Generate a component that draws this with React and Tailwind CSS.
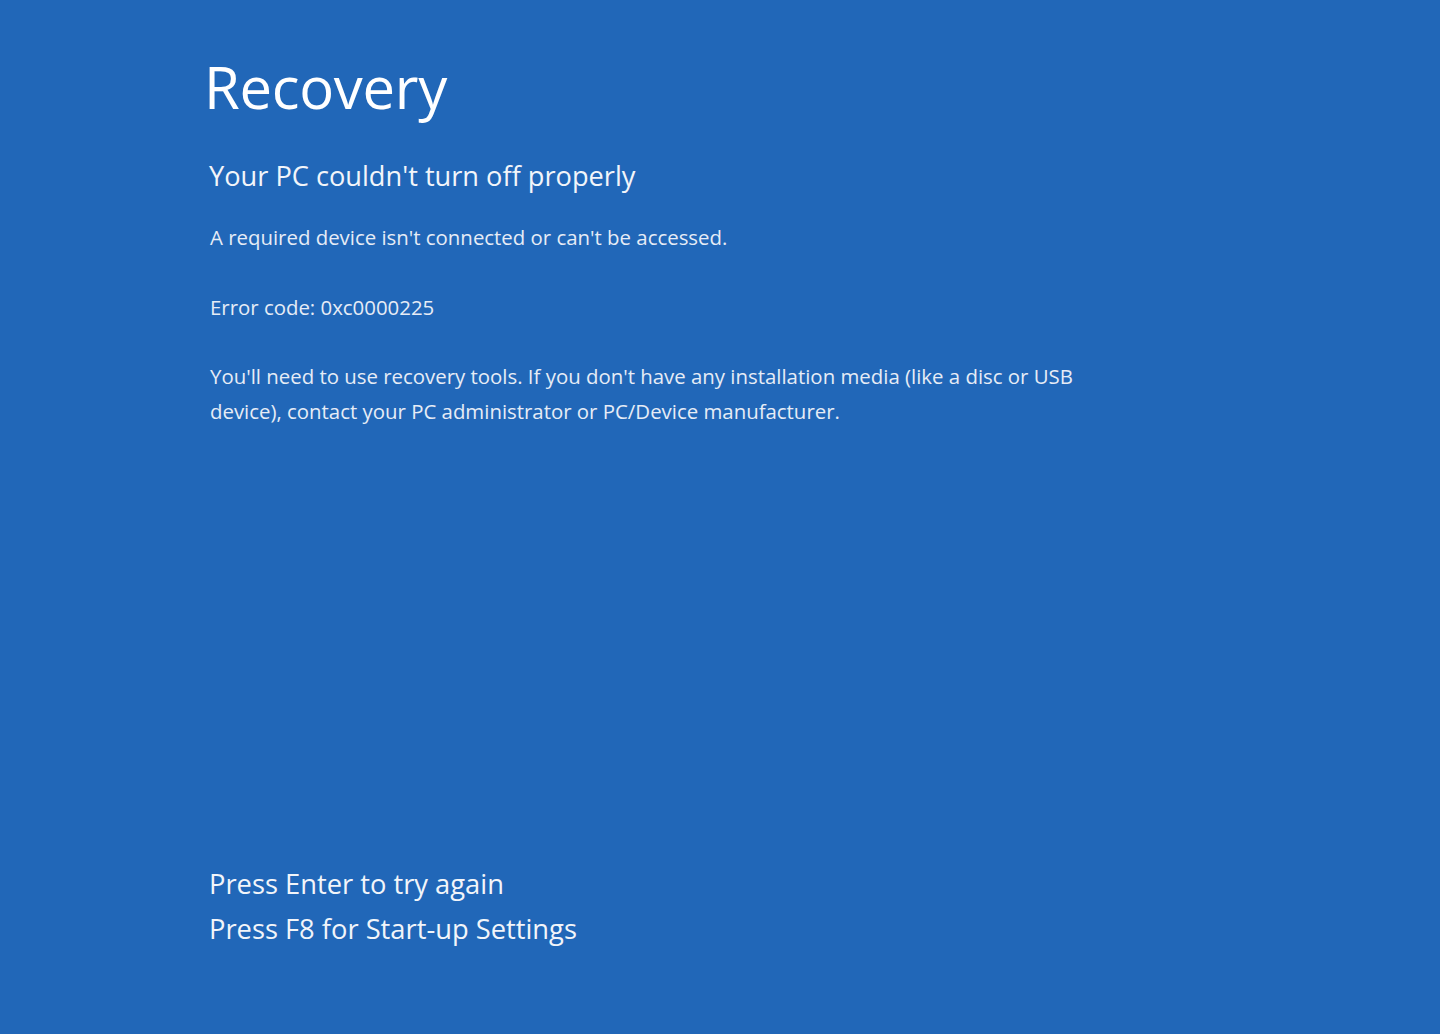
export default function App() {
  return (
    <div
      className="w-[1440px] h-[1034px] bg-[#2167b8] text-white flex flex-col pl-[206px] pt-[49px] overflow-hidden"
      style={{ fontFamily: '"Open Sans", "Noto Sans", sans-serif' }}
    >
      <h1 className="-ml-[2px] text-[58px] leading-[76px] font-normal tracking-[-0.3px]">Recovery</h1>
      <h2 className="mt-[33px] ml-[3px] text-[27.2px] leading-[36px] text-[#f2f5fa]">Your PC couldn't turn off properly</h2>
      <div className="ml-[4px] mt-[26px] text-[20.4px] text-[#e6ecf6] leading-[35px]">
        <p>A required device isn't connected or can't be accessed.</p>
        <p className="mt-[35px]">Error code: 0xc0000225</p>
        <p className="mt-[34px] w-[900px]">
          You'll need to use recovery tools. If you don't have any installation media (like a disc or USB device), contact your PC administrator or PC/Device manufacturer.
        </p>
      </div>
      <div className="mt-auto mb-[83px] ml-[3px] text-[27.3px] leading-[45px] text-[#f2f5fa]">
        <p>Press Enter to try again</p>
        <p>Press F8 for Start-up Settings</p>
      </div>
    </div>
  );
}
